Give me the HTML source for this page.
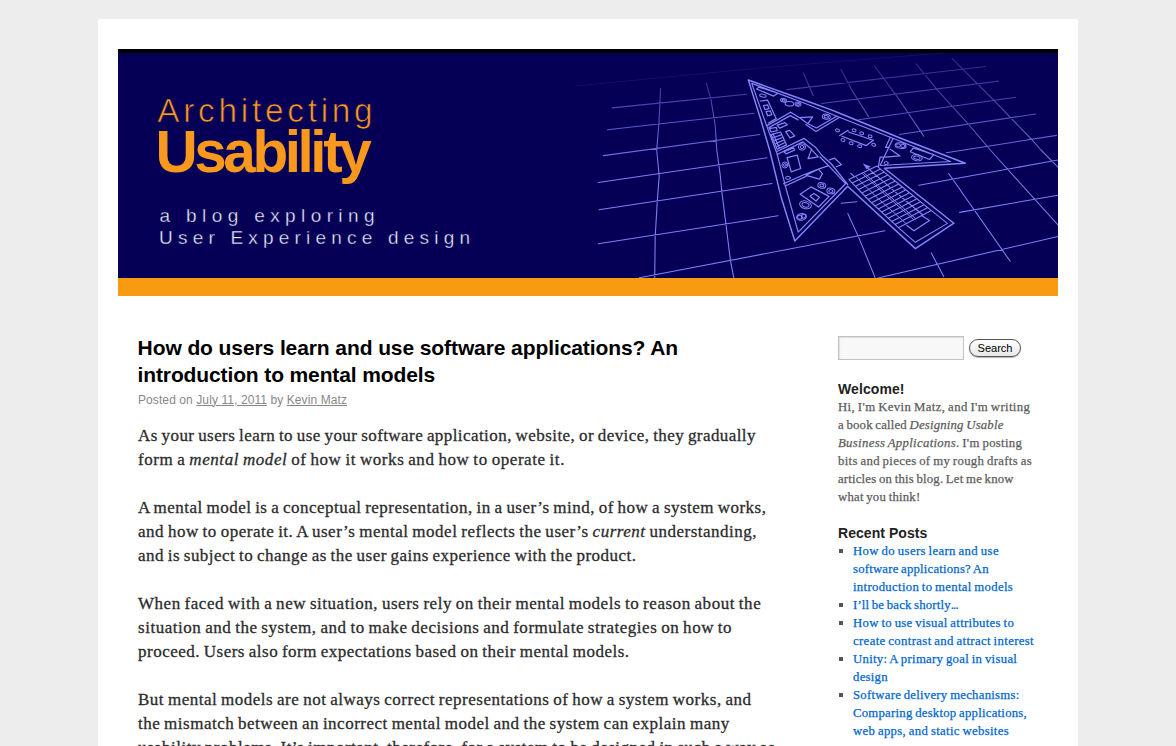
<!DOCTYPE html>
<html lang="en"><head><meta charset="utf-8"><title>Architecting Usability</title>
<style>
html,body{margin:0;padding:0;}
body{background:#ededed;font-family:"Liberation Sans",sans-serif;width:1176px;height:746px;overflow:hidden;position:relative;}
#wrapper{position:absolute;left:98px;top:19px;width:980px;height:727px;background:#fff;overflow:hidden;}
#hdr{position:absolute;left:20px;top:30px;width:940px;height:247px;display:block;}
.ln{position:absolute;white-space:nowrap;margin:0;padding:0;}
#wrapper .ln{margin-left:-98px;margin-top:-19px;}
.title{font:bold 21px/28px "Liberation Sans",sans-serif;color:#000;}
.meta{font:12px/16px "Liberation Sans",sans-serif;color:#888;}
.meta u{text-decoration:underline;}
.body{font:17px/24px "Liberation Serif",serif;color:#2c2c2c;-webkit-text-stroke:0.3px #2c2c2c;word-spacing:-0.9px;}
.wtitle{font:bold 14px/18px "Liberation Sans",sans-serif;color:#222;}
.side{font:12.75px/18px "Liberation Serif",serif;color:#5c5c5c;-webkit-text-stroke:0.25px #5c5c5c;word-spacing:-0.8px;}
.link{font:12.75px/18px "Liberation Serif",serif;color:#0066cc;-webkit-text-stroke:0.25px #0066cc;word-spacing:-0.8px;}
.bul{position:absolute;width:4px;height:4px;background:#555;margin-left:-98px;margin-top:-19px;}
#sin{position:absolute;left:740px;top:317px;width:124px;height:22px;border:1px solid #c2c2c2;background:#f8f8f8;box-shadow:inset 1px 1px 1px rgba(0,0,0,0.1);}
#sbt{position:absolute;left:871px;top:320px;width:50px;height:16px;border:1px solid #555;border-radius:9px;background:linear-gradient(#fff,#e8e8e8);font:11px/16px "Liberation Sans",sans-serif;color:#000;text-align:center;box-shadow:0 1px 1px rgba(0,0,0,0.3);}
</style></head>
<body>
<div id="wrapper">
<svg id="hdr" width="940" height="247" viewBox="118 49 940 247">
<rect x="118" y="49" width="940" height="4" fill="#000"/>
<rect x="118" y="53" width="940" height="225" fill="#050055"/>
<defs><linearGradient id="gg" gradientUnits="userSpaceOnUse" x1="0" y1="60" x2="0" y2="175"><stop offset="0" stop-color="#7e7ef4" stop-opacity="0.3"/><stop offset="1" stop-color="#7e7ef4" stop-opacity="1"/></linearGradient></defs>
<g fill="none" stroke="#8585f8" stroke-linecap="round" stroke-linejoin="round">
<path stroke-width="0.9" stroke-opacity="0.13" d="M575.0 86.0 L760.0 68.0 L945.0 52.8"/>
<path stroke="url(#gg)" stroke-width="1.08" d="M612.1 107.9 L746.6 94.3 M607.5 129.7 L754.3 113.2 M603.3 155.6 L759.9 134.5 M598.2 182.5 L767.0 157.8 M598.9 209.7 L772.1 183.5 M598.2 243.7 L778.1 215.8 M639.4 277.8 L885.0 230.7 M660.6 88.2 L658.9 122.9 L656.7 150.1 L659.2 176.0 L657.2 202.6 L655.2 236.6 L654.7 277.8 M706.3 83.2 L710.9 99.1 L715.1 124.6 L716.8 150.1 L720.2 174.8 L721.9 192.3 L726.2 226.4 L730.4 260.4 L733.8 277.8 M787.0 89.6 L985.6 66.5 M821.6 103.5 L998.7 81.1 M858.6 119.7 L1015.6 97.3 M899.3 134.5 L1035.6 114.0 M946.3 152.8 L1056.5 135.4 M918.9 185.3 L1058.0 160.0 M959.6 212.4 L1058.0 195.2 M878.0 278.0 L1058.0 236.5 M841.2 203.3 L856.9 201.7 M803.5 73.1 L813.2 95.8 M840.9 69.6 L852.5 91.2 L868.6 116.6 M874.8 66.2 L898.7 98.9 L923.7 136.1 M916.2 63.9 L937.0 89.6 L967.8 123.5 L990.3 150.0 L1058.0 225.0 M952.1 58.5 L994.0 100.4 L1031.8 139.7 L1041.0 150.0 L1058.0 167.2 M948.7 173.5 L1010.2 261.3 M931.2 252.8 L943.7 276.6 M847.8 213.5 L858.7 237.4 L875.1 277.6"/>
<path stroke-width="1.45" d="M748.3 80.0 L804.0 100.0 L830.0 109.4 L844.0 115.0 L900.0 138.0 L965.3 163.3 L884.4 168.3 L953.9 223.2 L915.4 248.6 L847.7 186.3 L794.8 241.0 L781.3 197.8 L769.6 150.0 L760.9 120.0 Z"/>
<path stroke-width="1.22" d="M890.3 137.2 L837.5 116.5 L804.0 103.0 L751.7 83.4 L766.7 125.9 L777.2 154.3 L785.2 185.4 L798.2 232.1 L845.5 183.7 M890.3 137.2 L950.5 161.5 L880.7 165.5 M766.7 125.9 L790.7 112.2 L799.7 117.7 M768.9 127.6 L790.3 115.6 L798.0 119.9 M799.7 117.7 L812.6 116.9 L807.9 123.7 Z M805.7 124.6 L816.0 131.5 L839.6 117.3 M807.9 123.7 L816.5 128.0 L836.2 116.5 M756.6 89.0 L758.9 87.1 L777.9 93.2 L773.6 96.1 Z M760.3 101.0 L767.6 100.2 L776.2 118.6 L768.5 123.0 M763.5 105.5 L767.5 104.8 L769.0 108.6 L765.0 109.6 Z M766.0 111.6 L770.3 110.8 L771.8 114.6 L767.7 115.8 Z M769.4 128.6 L776.3 127.3 L777.2 130.7 L771.1 132.0 Z M777.2 125.1 L784.9 122.6 L787.4 124.7 L779.7 128.1 Z M771.1 134.6 L780.6 132.0 L786.6 144.9 L777.2 149.2 Z M773.0 133.8 L779.3 147.8 M773.8 137.5 L781.8 134.6 M775.0 140.4 L783.0 137.2 M776.3 143.4 L784.2 139.7 M777.5 146.3 L785.4 142.3 M785.7 131.6 L789.6 130.3 L794.7 135.9 L790.0 138.0 Z M776.3 151.7 L804.2 138.4 L815.7 147.4 L822.0 155.5 L831.4 164.0 L847.7 184.5 M777.6 154.3 L802.9 141.9 L811.5 149.2 M820.0 157.0 L828.6 165.7 L845.5 183.7 M811.5 149.6 L808.0 158.6 L818.3 156.9 Z M829.5 159.9 L834.6 158.2 L841.5 164.6 L836.3 166.7 M784.0 151.7 L793.4 147.9 L794.7 150.0 L786.2 153.9 Z M787.0 157.7 L797.3 155.2 L800.7 168.5 L791.3 171.9 Z M783.5 183.7 L803.8 174.7 L818.4 169.1 L828.6 165.7 M785.2 186.0 L806.0 176.4 M806.0 175.3 L818.4 169.1 L822.4 173.6 L819.5 179.2 Z M800.2 194.2 L810.9 186.9 L829.0 196.4 L818.6 207.0 Z M810.0 196.3 L814.0 193.4 L819.4 197.3 L816.0 201.0 Z M839.7 135.6 L848.1 130.3 M848.5 132.0 L872.5 140.0 M842.0 136.2 L866.2 145.6 L873.4 140.2 M890.3 137.2 L885.5 147.4 L889.1 147.4 M892.8 139.0 L880.1 165.5 M878.3 166.8 L880.1 157.1 L883.1 157.1 M890.3 149.3 L900.0 155.9 L885.5 157.1 M910.3 151.7 L913.3 148.0 L933.8 154.7 L929.6 159.5 Z M906.9 225.5 L914.0 230.7 L929.5 220.4 L922.4 215.9 M851.0 173.4 L854.2 176.6"/>
<path stroke-width="1.1" d="M848.9 179.6 L876.9 166.1 M852.1 182.9 L880.5 169.1 M855.4 186.2 L884.2 172.0 M858.6 189.6 L887.8 175.0 M861.8 192.9 L891.4 178.0 M865.0 196.2 L895.1 180.9 M868.3 199.5 L898.7 183.9 M871.5 202.7 L902.3 186.9 M874.9 205.9 L906.0 189.8 M878.3 209.0 L909.6 192.8 M881.6 212.1 L913.2 195.8 M885.0 215.2 L916.9 198.7 M888.3 218.3 L920.5 201.7 M891.7 221.5 L924.1 204.7 M895.0 224.6 L927.8 207.6 M898.4 227.7 L931.4 210.6 M848.9 179.6 L870.2 201.5 L898.4 227.7 M869.6 169.6 L892.9 189.8 L922.8 215.0 M876.9 166.1 L900.9 185.7 L931.4 210.6 M869.6 169.6 L866.8 166.8 M931.4 210.6 L947.5 223.4 L915.3 242.3 L898.4 227.7"/>
<path stroke-width="0.95" d="M855.5 176.4 L877.4 197.8 L906.2 223.7 M862.1 173.3 L884.6 194.1 L913.9 219.7 M863.6 172.5 L886.3 193.2 L915.7 218.7"/>
<g stroke-width="1"><ellipse cx="762.9" cy="95.6" rx="3.3" ry="1.5" transform="rotate(12 762.9 95.6)"/><ellipse cx="789.5" cy="103.8" rx="4.3" ry="2.2" transform="rotate(5 789.5 103.8)"/><ellipse cx="783.5" cy="100.2" rx="3.0" ry="1.8" transform="rotate(15 783.5 100.2)"/><ellipse cx="783.5" cy="100.2" rx="1.5" ry="0.9" transform="rotate(15 783.5 100.2)"/><ellipse cx="798.0" cy="104.2" rx="3.0" ry="2.0" transform="rotate(10 798 104.2)"/><ellipse cx="798.0" cy="104.2" rx="1.4" ry="1.0" transform="rotate(10 798 104.2)"/><ellipse cx="826.3" cy="116.7" rx="4.0" ry="2.5" transform="rotate(10 826.3 116.7)"/><ellipse cx="826.3" cy="116.7" rx="2.2" ry="1.3" transform="rotate(10 826.3 116.7)"/><ellipse cx="802.0" cy="147.0" rx="3.6" ry="3.2"/><ellipse cx="802.0" cy="147.0" rx="1.8" ry="1.6"/><ellipse cx="784.9" cy="165.0" rx="3.0" ry="3.0"/><ellipse cx="784.9" cy="165.0" rx="1.4" ry="1.4"/><ellipse cx="787.9" cy="177.9" rx="2.5" ry="1.5"/><ellipse cx="805.5" cy="204.8" rx="6.0" ry="3.8" transform="rotate(15 805.5 204.8)"/><ellipse cx="805.5" cy="204.8" rx="3.6" ry="2.2" transform="rotate(15 805.5 204.8)"/><ellipse cx="801.5" cy="216.9" rx="5.0" ry="3.3" transform="rotate(-10 801.5 216.9)"/><ellipse cx="800.0" cy="217.2" rx="2.4" ry="2.0" transform="rotate(-10 800 217.2)"/><ellipse cx="803.5" cy="216.2" rx="2.2" ry="1.8" transform="rotate(-10 803.5 216.2)"/><ellipse cx="821.8" cy="185.4" rx="4.0" ry="2.8" transform="rotate(10 821.8 185.4)"/><ellipse cx="821.8" cy="185.4" rx="2.0" ry="1.4" transform="rotate(10 821.8 185.4)"/><ellipse cx="830.8" cy="191.0" rx="4.0" ry="2.8" transform="rotate(10 830.8 191)"/><ellipse cx="830.8" cy="191.0" rx="2.0" ry="1.4" transform="rotate(10 830.8 191)"/><ellipse cx="900.6" cy="145.6" rx="5.5" ry="2.8" transform="rotate(8 900.6 145.6)"/><ellipse cx="898.5" cy="145.4" rx="2.2" ry="1.6"/><ellipse cx="902.8" cy="145.9" rx="2.2" ry="1.6"/><ellipse cx="916.9" cy="157.7" rx="5.4" ry="3.0" transform="rotate(10 916.9 157.7)"/><ellipse cx="916.9" cy="157.7" rx="3.2" ry="1.6" transform="rotate(10 916.9 157.7)"/><ellipse cx="886.1" cy="163.1" rx="2.0" ry="1.6"/><ellipse cx="837.5" cy="130.3" rx="2.0" ry="1.4" transform="rotate(10 837.5 130.3)"/><ellipse cx="854.1" cy="130.3" rx="2.0" ry="1.4" transform="rotate(10 854.1 130.3)"/><ellipse cx="861.7" cy="133.3" rx="2.0" ry="1.4" transform="rotate(10 861.7 133.3)"/><ellipse cx="870.1" cy="136.3" rx="2.0" ry="1.4" transform="rotate(10 870.1 136.3)"/><ellipse cx="843.0" cy="140.0" rx="2.0" ry="1.4" transform="rotate(10 843 140)"/><ellipse cx="851.1" cy="143.2" rx="2.0" ry="1.4" transform="rotate(10 851.1 143.2)"/><ellipse cx="859.6" cy="146.2" rx="2.0" ry="1.4" transform="rotate(10 859.6 146.2)"/><ellipse cx="873.7" cy="144.8" rx="2.0" ry="1.4" transform="rotate(10 873.7 144.8)"/></g>
<path fill="#8585f8" stroke="none" d="M862.8 163.6 L870.6 166.4 L866.6 169.3 Z"/>
</g>
<rect x="118" y="278" width="940" height="18" fill="#f89a12"/>
<g font-family="Liberation Sans, sans-serif">
<text id="lg1" x="157.3" y="121.5" font-size="33.3" fill="#f8981d" stroke="#050055" stroke-width="0.7" textLength="215.3" lengthAdjust="spacing">Architecting</text>
<text id="lg2" x="155.5" y="172.4" font-size="58.5" font-weight="bold" fill="#f8981d" textLength="216.2" lengthAdjust="spacing">Usability</text>
<text id="lg3" x="159.5" y="222" font-size="19" fill="#ececfc" stroke="#050055" stroke-width="0.35" textLength="215" lengthAdjust="spacing">a blog exploring</text>
<text id="lg4" x="159" y="244" font-size="19" fill="#ececfc" stroke="#050055" stroke-width="0.35" textLength="311" lengthAdjust="spacing">User Experience design</text>
</g>
</svg>
<div id="sin"></div><div id="sbt">Search</div>
<div class="bul" style="left:839px;top:549px"></div><div class="bul" style="left:839px;top:603px"></div><div class="bul" style="left:839px;top:621px"></div><div class="bul" style="left:839px;top:657px"></div><div class="bul" style="left:839px;top:693px"></div>
<div class="ln title" id="t1" style="left:137.6px;top:333.60px;letter-spacing:-0.095px">How do users learn and use software applications? An</div>
<div class="ln title" id="t2" style="left:137.6px;top:360.60px;letter-spacing:-0.125px">introduction to mental models</div>
<div class="ln meta" id="m1" style="left:138px;top:391.50px;letter-spacing:0.090px">Posted on <u>July 11, 2011</u> by <u>Kevin Matz</u></div>
<div class="ln body" id="b0" style="left:138px;top:423.50px;letter-spacing:0.428px">As your users learn to use your software application, website, or device, they gradually</div>
<div class="ln body" id="b1" style="left:138px;top:447.50px;letter-spacing:0.572px">form a <i>mental model</i> of how it works and how to operate it.</div>
<div class="ln body" id="b2" style="left:138px;top:495.50px;letter-spacing:0.468px">A mental model is a conceptual representation, in a user’s mind, of how a system works,</div>
<div class="ln body" id="b3" style="left:138px;top:519.50px;letter-spacing:0.509px">and how to operate it. A user’s mental model reflects the user’s <i>current</i> understanding,</div>
<div class="ln body" id="b4" style="left:138px;top:543.50px;letter-spacing:0.463px">and is subject to change as the user gains experience with the product.</div>
<div class="ln body" id="b5" style="left:138px;top:591.50px;letter-spacing:0.531px">When faced with a new situation, users rely on their mental models to reason about the</div>
<div class="ln body" id="b6" style="left:138px;top:615.50px;letter-spacing:0.525px">situation and the system, and to make decisions and formulate strategies on how to</div>
<div class="ln body" id="b7" style="left:138px;top:639.50px;letter-spacing:0.488px">proceed. Users also form expectations based on their mental models.</div>
<div class="ln body" id="b8" style="left:138px;top:687.50px;letter-spacing:0.503px">But mental models are not always correct representations of how a system works, and</div>
<div class="ln body" id="b9" style="left:138px;top:711.50px;letter-spacing:0.498px">the mismatch between an incorrect mental model and the system can explain many</div>
<div class="ln body" id="b10" style="left:138px;top:735.50px;letter-spacing:0.487px">usability problems. It’s important, therefore, for a system to be designed in such a way as</div>
<div class="ln wtitle" id="w0" style="left:838px;top:379.70px;letter-spacing:0.091px">Welcome!</div>
<div class="ln side" id="s0" style="left:838px;top:398.30px;letter-spacing:0.381px">Hi, I'm Kevin Matz, and I'm writing</div>
<div class="ln side" id="s1" style="left:838px;top:416.30px;letter-spacing:0.194px">a book called <i>Designing Usable</i></div>
<div class="ln side" id="s2" style="left:838px;top:434.30px;letter-spacing:0.325px"><i>Business Applications</i>. I'm posting</div>
<div class="ln side" id="s3" style="left:838px;top:452.30px;letter-spacing:0.332px">bits and pieces of my rough drafts as</div>
<div class="ln side" id="s4" style="left:838px;top:470.30px;letter-spacing:0.195px">articles on this blog. Let me know</div>
<div class="ln side" id="s5" style="left:838px;top:488.30px;letter-spacing:0.217px">what you think!</div>
<div class="ln wtitle" id="w1" style="left:838px;top:523.80px;letter-spacing:0.058px">Recent Posts</div>
<div class="ln link" id="r0" style="left:853px;top:542.00px;letter-spacing:0.359px">How do users learn and use</div>
<div class="ln link" id="r1" style="left:853px;top:560.00px;letter-spacing:0.199px">software applications? An</div>
<div class="ln link" id="r2" style="left:853px;top:578.00px;letter-spacing:0.316px">introduction to mental models</div>
<div class="ln link" id="r3" style="left:853px;top:596.00px;letter-spacing:0.172px">I’ll be back shortly<span style="letter-spacing:-0.8px">...</span></div>
<div class="ln link" id="r4" style="left:853px;top:614.00px;letter-spacing:0.311px">How to use visual attributes to</div>
<div class="ln link" id="r5" style="left:853px;top:632.00px;letter-spacing:0.358px">create contrast and attract interest</div>
<div class="ln link" id="r6" style="left:853px;top:650.00px;letter-spacing:0.296px">Unity: A primary goal in visual</div>
<div class="ln link" id="r7" style="left:853px;top:668.00px;letter-spacing:0.267px">design</div>
<div class="ln link" id="r8" style="left:853px;top:686.00px;letter-spacing:0.253px">Software delivery mechanisms:</div>
<div class="ln link" id="r9" style="left:853px;top:704.00px;letter-spacing:0.238px">Comparing desktop applications,</div>
<div class="ln link" id="r10" style="left:853px;top:722.00px;letter-spacing:0.325px">web apps, and static websites</div>
</div>
</body></html>
